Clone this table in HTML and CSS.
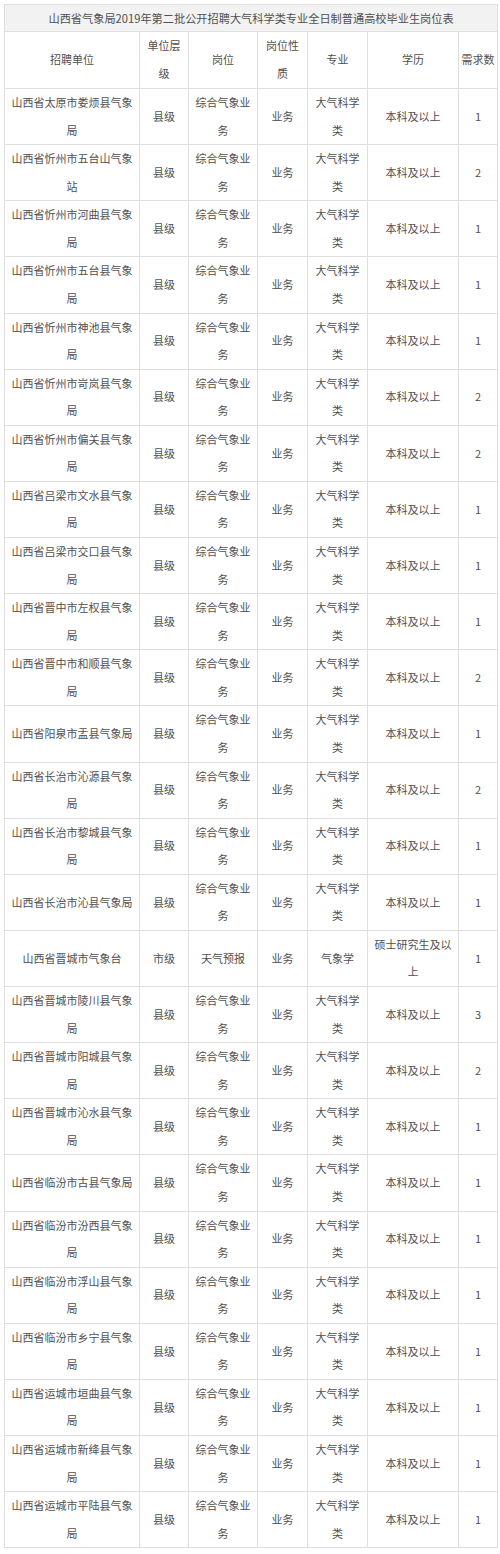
FILE: index.html
```html
<!DOCTYPE html>
<html lang="zh">
<head>
<meta charset="utf-8">
<link rel="stylesheet" href="styles.css">
</head>
<body>
<div class="page">
<table class="jobs">
<colgroup>
<col class="c1"><col class="c2"><col class="c3"><col class="c4"><col class="c5"><col class="c6"><col class="c7">
</colgroup>
<thead>
<tr class="title"><td colspan="7">山西省气象局2019年第二批公开招聘大气科学类专业全日制普通高校毕业生岗位表</td></tr>
<tr class="head"><td>招聘单位</td><td>单位层级</td><td>岗位</td><td>岗位性质</td><td>专业</td><td>学历</td><td>需求数</td></tr>
</thead>
<tbody>
<tr><td>山西省太原市娄烦县气象局</td><td>县级</td><td>综合气象业务</td><td>业务</td><td>大气科学类</td><td>本科及以上</td><td>1</td></tr>
<tr><td>山西省忻州市五台山气象站</td><td>县级</td><td>综合气象业务</td><td>业务</td><td>大气科学类</td><td>本科及以上</td><td>2</td></tr>
<tr><td>山西省忻州市河曲县气象局</td><td>县级</td><td>综合气象业务</td><td>业务</td><td>大气科学类</td><td>本科及以上</td><td>1</td></tr>
<tr><td>山西省忻州市五台县气象局</td><td>县级</td><td>综合气象业务</td><td>业务</td><td>大气科学类</td><td>本科及以上</td><td>1</td></tr>
<tr><td>山西省忻州市神池县气象局</td><td>县级</td><td>综合气象业务</td><td>业务</td><td>大气科学类</td><td>本科及以上</td><td>1</td></tr>
<tr><td>山西省忻州市岢岚县气象局</td><td>县级</td><td>综合气象业务</td><td>业务</td><td>大气科学类</td><td>本科及以上</td><td>2</td></tr>
<tr><td>山西省忻州市偏关县气象局</td><td>县级</td><td>综合气象业务</td><td>业务</td><td>大气科学类</td><td>本科及以上</td><td>2</td></tr>
<tr><td>山西省吕梁市文水县气象局</td><td>县级</td><td>综合气象业务</td><td>业务</td><td>大气科学类</td><td>本科及以上</td><td>1</td></tr>
<tr><td>山西省吕梁市交口县气象局</td><td>县级</td><td>综合气象业务</td><td>业务</td><td>大气科学类</td><td>本科及以上</td><td>1</td></tr>
<tr><td>山西省晋中市左权县气象局</td><td>县级</td><td>综合气象业务</td><td>业务</td><td>大气科学类</td><td>本科及以上</td><td>1</td></tr>
<tr><td>山西省晋中市和顺县气象局</td><td>县级</td><td>综合气象业务</td><td>业务</td><td>大气科学类</td><td>本科及以上</td><td>2</td></tr>
<tr><td>山西省阳泉市盂县气象局</td><td>县级</td><td>综合气象业务</td><td>业务</td><td>大气科学类</td><td>本科及以上</td><td>1</td></tr>
<tr><td>山西省长治市沁源县气象局</td><td>县级</td><td>综合气象业务</td><td>业务</td><td>大气科学类</td><td>本科及以上</td><td>2</td></tr>
<tr><td>山西省长治市黎城县气象局</td><td>县级</td><td>综合气象业务</td><td>业务</td><td>大气科学类</td><td>本科及以上</td><td>1</td></tr>
<tr><td>山西省长治市沁县气象局</td><td>县级</td><td>综合气象业务</td><td>业务</td><td>大气科学类</td><td>本科及以上</td><td>1</td></tr>
<tr><td>山西省晋城市气象台</td><td>市级</td><td>天气预报</td><td>业务</td><td>气象学</td><td>硕士研究生及以上</td><td>1</td></tr>
<tr><td>山西省晋城市陵川县气象局</td><td>县级</td><td>综合气象业务</td><td>业务</td><td>大气科学类</td><td>本科及以上</td><td>3</td></tr>
<tr><td>山西省晋城市阳城县气象局</td><td>县级</td><td>综合气象业务</td><td>业务</td><td>大气科学类</td><td>本科及以上</td><td>2</td></tr>
<tr><td>山西省晋城市沁水县气象局</td><td>县级</td><td>综合气象业务</td><td>业务</td><td>大气科学类</td><td>本科及以上</td><td>1</td></tr>
<tr><td>山西省临汾市古县气象局</td><td>县级</td><td>综合气象业务</td><td>业务</td><td>大气科学类</td><td>本科及以上</td><td>1</td></tr>
<tr><td>山西省临汾市汾西县气象局</td><td>县级</td><td>综合气象业务</td><td>业务</td><td>大气科学类</td><td>本科及以上</td><td>1</td></tr>
<tr><td>山西省临汾市浮山县气象局</td><td>县级</td><td>综合气象业务</td><td>业务</td><td>大气科学类</td><td>本科及以上</td><td>1</td></tr>
<tr><td>山西省临汾市乡宁县气象局</td><td>县级</td><td>综合气象业务</td><td>业务</td><td>大气科学类</td><td>本科及以上</td><td>1</td></tr>
<tr><td>山西省运城市垣曲县气象局</td><td>县级</td><td>综合气象业务</td><td>业务</td><td>大气科学类</td><td>本科及以上</td><td>1</td></tr>
<tr><td>山西省运城市新绛县气象局</td><td>县级</td><td>综合气象业务</td><td>业务</td><td>大气科学类</td><td>本科及以上</td><td>1</td></tr>
<tr><td>山西省运城市平陆县气象局</td><td>县级</td><td>综合气象业务</td><td>业务</td><td>大气科学类</td><td>本科及以上</td><td>1</td></tr>
</tbody>
</table>
</div>
</body>
</html>
```
FILE: styles.css
```css
html, body {
  margin: 0;
  padding: 0;
  background: #ffffff;
}
.page {
  padding: 4px 0 0 4px;
}
.jobs {
  border-collapse: collapse;
  table-layout: fixed;
  width: 494px;
  font-family: "Noto Sans CJK SC", "Liberation Sans", sans-serif;
  font-size: 11px;
  color: #505050;
}
.c1 { width: 135px; }
.c2 { width: 49px; }
.c3 { width: 69px; }
.c4 { width: 50px; }
.c5 { width: 60px; }
.c6 { width: 91px; }
.c7 { width: 39px; }
.jobs td {
  border: 1px solid #dedede;
  text-align: center;
  vertical-align: middle;
  padding: 0 3px;
  line-height: 27.56px;
  height: 55.12px;
  box-sizing: border-box;
  word-break: break-all;
}
.jobs td:last-child {
  padding: 0 1px;
}
.jobs .title td {
  background: #f2f2f2;
  height: 27px;
  line-height: 26px;
  font-size: 11.2px;
  padding: 0 3px;
}
.jobs .head td {
  height: 57px;
}
```
